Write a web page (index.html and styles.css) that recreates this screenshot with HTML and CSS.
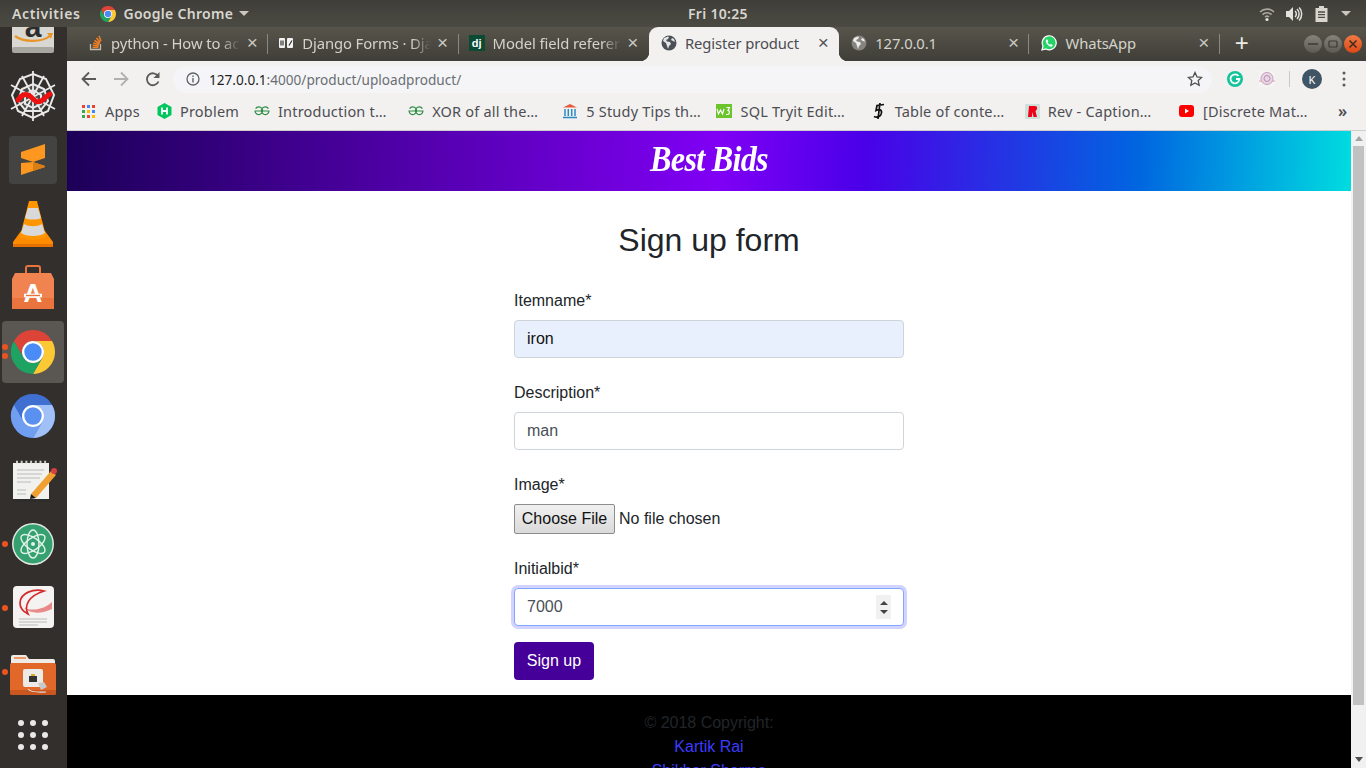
FILE: index.html
```html
<!DOCTYPE html>
<html lang="en">
<head>
<meta charset="utf-8">
<title>Register product</title>
<link rel="stylesheet" href="styles.css">
</head>
<body>
<svg class="defs" width="0" height="0" aria-hidden="true">
  <defs>
    <symbol id="chrome" viewBox="0 0 48 48">
      <path fill="#db4437" d="M3.2 12A24 24 0 0 1 44.78 12H24A12 12 0 0 0 13.6 30Z"/>
      <path fill="#fcc934" d="M44.78 12A24 24 0 0 1 24 48L34.39 30A12 12 0 0 0 24 12Z"/>
      <path fill="#1ea362" d="M24 48A24 24 0 0 1 3.2 12L13.6 30A12 12 0 0 0 34.39 30Z"/>
      <circle cx="24" cy="24" r="12" fill="#fff"/>
      <circle cx="24" cy="24" r="9.5" fill="#4b8bf5"/>
    </symbol>
    <symbol id="globe" viewBox="0 0 16 16">
      <circle cx="8" cy="8" r="7.5" fill="currentColor"/>
      <path fill="#fff" fill-opacity=".85" d="M7 1.5 3 3 2 6l3 2 1 3 1 3 1-3 2-2-1-2-3-.5L5 5l2-1 1-2zM11 3l-1 2 2 1 2 1-1-3z"/>
    </symbol>
    <symbol id="gfg" viewBox="0 0 16 10">
      <path fill="none" stroke="#2f8d46" stroke-width="1.2" d="M14.4 2.700A3.800 3.800 0 1 0 15 5H1A3.800 3.800 0 1 0 1.600 2.700"/>
    </symbol>
  </defs>
</svg>

<div class="desktop">
  <header class="topbar">
    <div class="top-left">
      <span class="top-item top-activities">Activities</span>
      <svg class="app-logo" width="16" height="16"><use href="#chrome"/></svg>
      <span class="top-item">Google Chrome</span>
      <span class="caret"></span>
    </div>
    <div class="top-item clock">Fri 10:25</div>
    <div class="top-right">
      <svg width="18" height="16" viewBox="0 0 18 16"><path fill="none" stroke="#a9a7a0" stroke-width="1.600" d="M2 6a10 10 0 0 1 14 0M4.500 8.600a6.500 6.500 0 0 1 9 0M7 11a3 3 0 0 1 4 0"/><circle cx="9" cy="13.500" r="1.600" fill="#e4e2dc"/></svg>
      <svg width="18" height="16" viewBox="0 0 18 16"><path fill="#e4e2dc" d="M1 5h3l4-4v14l-4-4H1z"/><path fill="none" stroke="#e4e2dc" stroke-width="1.500" d="M10 5a4 4 0 0 1 0 6M12 3a7 7 0 0 1 0 10M14.200 1.600a9.500 9.500 0 0 1 0 12.800"/></svg>
      <svg class="battery" width="14" height="16" viewBox="0 0 14 16"><path fill="#d8d6cf" d="M4 0h5v2h3.500v14H.5V2H4z"/><path stroke="#4e4c44" stroke-width="1.300" d="M3 6h7M3 8.700h7M3 11.400h7"/></svg>
      <span class="caret"></span>
    </div>
  </header>

  <div class="workspace">
    <nav class="dock">
      <svg class="dock-icon" viewBox="0 0 67 64">
        <rect x="12" y="8" width="42" height="44" rx="3" fill="#d9d7d2"/>
        <rect x="12" y="47" width="42" height="6" rx="2" fill="#a8a6a0"/>
        <text x="33" y="37" class="amazon-a">a</text>
        <path fill="none" stroke="#e8962a" stroke-width="2.200" d="M15 36c8 6 26 7 35 0"/>
        <path fill="#e8962a" d="M47 33l6 0-2 6z"/>
      </svg>
      <svg class="dock-icon" viewBox="0 0 67 64">
        <g fill="none" stroke="#e9e9e9" stroke-width="2">
          <path fill="#4a4a4a" d="M33 20 44 25 48 37 40 47 26 47 18 37 22 25Z"/>
          <path stroke-width="1.800" d="M33 7V57M11 21l44 24M55 21 11 45M22 12 44 52M44 12 22 52"/>
          <path fill="none" d="M33 10 46 15 54 31 48 47 33 54 18 47 12 31 20 15Z"/>
          <path d="M33 26 41 31 41 40 33 44 25 40 25 31Z"/>
        </g>
        <path fill="none" stroke="#ee1111" stroke-width="5" stroke-linecap="round" d="M18 36c4-6 9-7 13-3s6 6 10 4 5-5 9-7"/>
      </svg>
      <svg class="dock-icon" viewBox="0 0 67 64">
        <rect x="9" y="8" width="48" height="48" rx="4" fill="#434341"/>
        <path fill="#fd971f" d="M21 24 45 16V30L33 34 45 38V39L21 47V35L33 34 21 30Z"/>
        <path fill="#d97e14" d="M33 34 45 38V39L33 43Z"/>
      </svg>
      <svg class="dock-icon" viewBox="0 0 67 64">
        <path fill="#ff8c00" d="M13 50 21 39H45L53 50 53 55H13Z"/>
        <path fill="#e57200" d="M13 52H53V55H13Z"/>
        <path fill="#ff9500" d="M29 9H37L46 44C42 49 24 49 20 44Z"/>
        <path fill="#d9d9d9" d="M28 16H38L41 26C38 28 28 28 25 26Z"/>
        <path fill="#d9d9d9" d="M24 32C29 35 37 35 42 32L45 41C40 45 26 45 21 41Z"/>
      </svg>
      <svg class="dock-icon" viewBox="0 0 67 64">
        <path fill="none" stroke="#e9743e" stroke-width="2" d="M26 20V12a2 2 0 0 1 2-2h10a2 2 0 0 1 2 2v8"/>
        <path fill="#f08350" d="M15 17H51L54 23V53H12V23Z"/>
        <path fill="#e9743e" d="M12 42H54V53H12Z"/>
        <text x="33" y="46" class="store-a">A</text>
        <path stroke="#fff" stroke-width="3.600" d="M24 39.500H42"/>
        <path stroke="#e9743e" stroke-width="1.400" d="M26 39.500H40"/>
      </svg>
      <div class="dock-active">
        <span class="dot dot-a"></span><span class="dot dot-b"></span>
        <svg class="dock-logo" width="44" height="44"><use href="#chrome"/></svg>
      </div>
      <svg class="dock-icon" viewBox="0 0 67 64">
        <circle cx="33" cy="32" r="22" fill="#4a76cf"/>
        <g transform="translate(11 10) scale(.9167)">
          <path fill="#3f6fd0" d="M3.2 12A24 24 0 0 1 44.78 12H24A12 12 0 0 0 13.6 30Z"/>
          <path fill="#a2c0f8" d="M44.78 12A24 24 0 0 1 24 48L34.39 30A12 12 0 0 0 24 12Z"/>
          <path fill="#709ef0" d="M24 48A24 24 0 0 1 3.2 12L13.6 30A12 12 0 0 0 34.39 30Z"/>
          <circle cx="24" cy="24" r="12" fill="#fff"/>
          <circle cx="24" cy="24" r="9.500" fill="#5a90f0"/>
        </g>
      </svg>
      <svg class="dock-icon" viewBox="0 0 67 64">
        <path fill="#2d2d2b" d="M14 16H50V54H14Z"/>
        <path fill="#f1f1ee" d="M13 15H49V51H13Z"/>
        <path stroke="#bbb" stroke-width="1" d="M17 22H44M17 26H42M17 30H40M17 34H31M17 42H26M17 46H26"/>
        <path stroke="#cfcfcc" stroke-width="2.500" stroke-dasharray="2 2.700" d="M16 14H46"/>
        <path fill="#f0a030" d="M31 46 51 23 56 27 36 50Z"/>
        <path fill="#1c1c1c" d="M31 46 30 51 36 50Z"/>
        <circle cx="54" cy="23" r="3" fill="#d64040"/>
      </svg>
      <div class="dock-slot">
        <span class="dot dot-c"></span>
        <svg class="dock-icon" viewBox="0 0 67 64">
          <circle cx="33" cy="32" r="21" fill="#e3e8e2"/>
          <circle cx="33" cy="32" r="19.500" fill="#35a070"/>
          <g fill="none" stroke="#e3f3ea" stroke-width="1.400">
            <ellipse cx="33" cy="32" rx="14" ry="6" transform="rotate(35 33 32)"/>
            <ellipse cx="33" cy="32" rx="14" ry="6" transform="rotate(-35 33 32)"/>
            <ellipse cx="33" cy="32" rx="6" ry="14"/>
          </g>
          <circle cx="33" cy="32" r="2" fill="#e3f3ea"/>
        </svg>
      </div>
      <div class="dock-slot">
        <span class="dot dot-c"></span>
        <svg class="dock-icon" viewBox="0 0 67 64">
          <rect x="13" y="10" width="41" height="42" rx="4" fill="#f4f3f1"/>
          <path fill="#e88a8a" d="M24 32C34 36 46 32 52 26V33C42 38 30 38 24 32Z"/>
          <path fill="none" stroke="#d32b2b" stroke-width="1.700" d="M44 15C34 12 20 17 20 27 20 33 24 36 28 38 24 30 28 20 44 15Z"/>
          <path stroke="#b9b9b9" stroke-width="1" d="M19 43H47M19 46H47M19 49H38"/>
        </svg>
      </div>
      <div class="dock-slot">
        <span class="dot dot-c"></span>
        <svg class="dock-icon" viewBox="0 0 67 64">
          <g transform="translate(0 7)">
            <path fill="#efebe6" d="M11 15V10a2 2 0 0 1 2-2h13l3 4h24a2 2 0 0 1 2 2v4H11Z"/>
            <path fill="#f09a6a" d="M14 10H26V12H14Z"/>
            <path fill="#e2682a" d="M10 18a2 2 0 0 1 2-2h42a2 2 0 0 1 2 2v28a2 2 0 0 1-2 2H12a2 2 0 0 1-2-2Z"/>
            <path fill="#c9571f" d="M10 43H56V46a2 2 0 0 1-2 2H12a2 2 0 0 1-2-2Z"/>
            <rect x="23" y="22" width="20" height="18" rx="2" fill="#eceae6"/>
            <path fill="#333" d="M29 29h8v6h-8z"/>
            <path fill="#d8b020" d="M31 27h4v2h-4z"/>
            <path fill="#c9c9c9" d="M38 36l6-1 3 5-6 3z"/>
            <path fill="none" stroke="#ddd" stroke-width="1.200" d="M28 42c3 4 12 3 18 3"/>
          </g>
        </svg>
      </div>
      <svg class="dock-icon" viewBox="0 0 67 64">
        <g fill="#e8e8e6">
          <circle cx="21" cy="19" r="3"/><circle cx="33" cy="19" r="3"/><circle cx="45" cy="19" r="3"/>
          <circle cx="21" cy="31" r="3"/><circle cx="33" cy="31" r="3"/><circle cx="45" cy="31" r="3"/>
          <circle cx="21" cy="43" r="3"/><circle cx="33" cy="43" r="3"/><circle cx="45" cy="43" r="3"/>
        </g>
      </svg>
    </nav>

    <div class="browser">
      <div class="tabstrip">
        <div class="tab">
          <svg class="fav fav-so" width="16" height="16" viewBox="0 0 16 16"><path fill="none" stroke="#bcbbb6" stroke-width="1.300" d="M2.500 9v5.500h10V9"/><path stroke="#f48024" stroke-width="1.500" d="M4.500 12.500h6M4.700 10.300l6 .6M5.300 8l5.800 1.600M6.500 5.500l5.200 3M8.500 3l3.800 4.500M11 1l2 5"/></svg>
          <span class="tab-title">python - How to ac</span>
          <span class="tab-x">×</span>
        </div>
        <div class="tab">
          <svg class="fav" width="16" height="16" viewBox="0 0 16 16"><rect x="1" y="3" width="6" height="10" rx="1" fill="#f3f3f3"/><rect x="9" y="3" width="6" height="10" rx="1" fill="#f3f3f3"/><path stroke="#333" stroke-width="1.200" d="M3 5.500v5M5 5.500v5M11 10.500l3-5"/></svg>
          <span class="tab-title">Django Forms · Dja</span>
          <span class="tab-x">×</span>
        </div>
        <div class="tab">
          <span class="fav dj">dj</span>
          <span class="tab-title">Model field referer</span>
          <span class="tab-x">×</span>
        </div>
        <div class="tab tab-active">
          <svg class="fav globe-dark" width="16" height="16"><use href="#globe"/></svg>
          <span class="tab-title">Register product</span>
          <span class="tab-x">×</span>
        </div>
        <div class="tab tab-after">
          <svg class="fav globe-dim" width="16" height="16"><use href="#globe"/></svg>
          <span class="tab-title">127.0.0.1</span>
          <span class="tab-x">×</span>
        </div>
        <div class="tab tab-after">
          <svg class="fav" width="16" height="16" viewBox="0 0 16 16"><path fill="#25d366" stroke="#fff" stroke-width="1.200" d="M1 15l1-4a7 7 0 1 1 3 3z"/><path fill="#fff" d="M5.500 4.500c-1 1-1 2.500.5 4.500s3.500 3 5 2.500l.8-1.500-2-1-.8.800c-1-.4-2-1.400-2.500-2.500l.8-.8-1-2z"/></svg>
          <span class="tab-title">WhatsApp</span>
          <span class="tab-x">×</span>
        </div>
        <span class="new-tab">+</span>
        <div class="win-buttons">
          <span class="win-btn">
            <svg width="10" height="10" viewBox="0 0 10 10"><path stroke="#3b3a34" stroke-width="1.500" d="M0 5h10"/></svg>
          </span>
          <span class="win-btn">
            <svg width="10" height="10" viewBox="0 0 10 10"><rect x="1" y="2" width="8" height="6" rx="1" fill="none" stroke="#3b3a34" stroke-width="1.200"/></svg>
          </span>
          <span class="win-btn win-close">
            <svg width="10" height="10" viewBox="0 0 10 10"><path stroke="#3b2a20" stroke-width="1.500" d="M1.500 1.500l7 7M8.500 1.500l-7 7"/></svg>
          </span>
        </div>
      </div>

      <div class="toolbar">
        <svg class="tool" width="18" height="18" viewBox="0 0 18 18"><path fill="none" stroke="#5a5a5a" stroke-width="1.800" d="M16 9H3M9 2.500 2.500 9 9 15.500"/></svg>
        <svg class="tool" width="18" height="18" viewBox="0 0 18 18"><path fill="none" stroke="#b0b0b0" stroke-width="1.800" d="M2 9h13M9 2.500 15.500 9 9 15.500"/></svg>
        <svg class="tool" width="18" height="18" viewBox="0 0 18 18"><path fill="none" stroke="#5a5a5a" stroke-width="1.800" d="M14.500 11.500A6 6 0 1 1 14 6"/><path fill="#5a5a5a" d="M15.500 2v6h-6z"/></svg>
        <div class="omnibox">
          <svg width="14" height="14" viewBox="0 0 14 14"><circle cx="7" cy="7" r="6" fill="none" stroke="#5f6368" stroke-width="1.300"/><path stroke="#5f6368" stroke-width="1.400" d="M7 6v4.500M7 3.500v1.500"/></svg>
          <span class="url"><span class="url-host">127.0.0.1</span>:4000/product/uploadproduct/</span>
          <svg class="star" width="16" height="16" viewBox="0 0 16 16"><path fill="none" stroke="#4e4e4e" stroke-width="1.300" d="M8 1.500l2 4.400 4.700.5-3.500 3.200 1 4.700L8 11.900l-4.200 2.400 1-4.700L1.300 6.400 6 5.900z"/></svg>
        </div>
        <svg class="ext-g" width="16" height="16" viewBox="0 0 16 16"><circle cx="8" cy="8" r="8" fill="#15c39a"/><path fill="none" stroke="#fff" stroke-width="1.800" d="M11.500 5A4.500 4.500 0 1 0 12.500 8H9"/></svg>
        <svg class="ext-seal" width="16" height="16" viewBox="0 0 16 16"><rect width="16" height="16" fill="#f6f3f3"/><circle cx="8" cy="7.500" r="6" fill="#e9d6e4" stroke="#c6a1bf"/><circle cx="8" cy="7.500" r="3" fill="none" stroke="#b98fb1"/><path stroke="#d9a8a8" d="M0 10h3M13 10h3"/></svg>
        <span class="tool-sep"></span>
        <span class="avatar">K</span>
        <svg class="kebab" width="4" height="16" viewBox="0 0 4 16"><circle cx="2" cy="2" r="1.500" fill="#5a5a5a"/><circle cx="2" cy="8" r="1.500" fill="#5a5a5a"/><circle cx="2" cy="14" r="1.500" fill="#5a5a5a"/></svg>
      </div>

      <div class="bookmarks">
        <div class="bm bm-apps">
          <svg width="13" height="13" viewBox="0 0 13 13"><g><rect width="3" height="3" fill="#ea4335"/><rect x="5" width="3" height="3" fill="#4285f4"/><rect x="10" width="3" height="3" fill="#ea4335"/><rect y="5" width="3" height="3" fill="#34a853"/><rect x="5" y="5" width="3" height="3" fill="#fbbc05"/><rect x="10" y="5" width="3" height="3" fill="#4285f4"/><rect y="10" width="3" height="3" fill="#34a853"/><rect x="5" y="10" width="3" height="3" fill="#ea4335"/><rect x="10" y="10" width="3" height="3" fill="#fbbc05"/></g></svg>
          <span>Apps</span>
        </div>
        <div class="bm bm-problem">
          <svg width="15" height="16" viewBox="0 0 15 16"><path fill="#00c65e" d="M7.500 0 14.500 4V12L7.500 16 .5 12V4Z"/><path stroke="#fff" stroke-width="1.800" d="M5 4.500v7M10 4.500v7M5 8h5"/></svg>
          <span>Problem</span>
        </div>
        <div class="bm"><svg width="16" height="10"><use href="#gfg"/></svg><span>Introduction t…</span></div>
        <div class="bm"><svg width="16" height="10"><use href="#gfg"/></svg><span>XOR of all the…</span></div>
        <div class="bm">
          <svg width="16" height="16" viewBox="0 0 16 16"><path fill="#e25b3a" d="M8 1 15 4.500H1Z"/><path stroke="#2a8ac4" stroke-width="1.500" d="M3 6v7M6.300 6v7M9.700 6v7M13 6v7M1 14.500h14"/></svg>
          <span>5 Study Tips th…</span>
        </div>
        <div class="bm">
          <svg width="16" height="14" viewBox="0 0 16 14"><rect width="16" height="14" fill="#6bc42c"/><path fill="none" stroke="#fff" stroke-width="1.200" d="M1 5l1.500 5L4.500 6l2 4L8 5M10.500 3.500h3l-1.500 3c2 0 2 4-.5 4h-1.500"/></svg>
          <span>SQL Tryit Edit…</span>
        </div>
        <div class="bm">
          <svg width="16" height="18" viewBox="0 0 16 18"><path fill="none" stroke="#111" stroke-width="1.700" d="M13 2.500 6 3.500 5 8.500c3-1.500 6-1 5.500 2.500S6 16 3 14.500M9 1 7 17"/></svg>
          <span>Table of conte…</span>
        </div>
        <div class="bm">
          <svg width="15" height="15" viewBox="0 0 15 15"><rect width="15" height="15" rx="1" fill="#cfe0da"/><path fill="#f00018" d="M4 2h6c2.500 0 3 3 .5 5l1.500 6H8.500L7.500 8 6.800 13H3z"/></svg>
          <span>Rev - Caption…</span>
        </div>
        <div class="bm bm-wide">
          <svg width="15" height="12" viewBox="0 0 15 12"><rect width="15" height="12" rx="3" fill="#f00"/><path fill="#fff" d="M6 3.500 10 6 6 8.500z"/></svg>
          <span>[Discrete Mat…</span>
        </div>
        <span class="bm-more">»</span>
      </div>

      <div class="viewport">
        <main class="page">
          <header class="brand"><h1 class="brand-name">Best Bids</h1></header>
          <section class="content">
            <h2 class="form-title">Sign up form</h2>
            <form class="form">
              <div class="field">
                <label class="label" for="itemname">Itemname*</label>
                <input class="input input-filled" id="itemname" type="text" value="iron">
              </div>
              <div class="field">
                <label class="label" for="description">Description*</label>
                <input class="input" id="description" type="text" value="man">
              </div>
              <div class="field">
                <label class="label" for="image">Image*</label>
                <input class="file" id="image" type="file">
              </div>
              <div class="field field-bid">
                <label class="label" for="bid">Initialbid*</label>
                <div class="bid-wrap">
                  <input class="input input-focus" id="bid" type="text" value="7000">
                  <span class="spinner"><i class="spin-up"></i><i class="spin-down"></i></span>
                </div>
              </div>
              <button class="submit" type="button">Sign up</button>
            </form>
          </section>
          <footer class="footer">
            <p class="footer-line">© 2018 Copyright:</p>
            <p class="footer-line"><a class="footer-link">Kartik Rai</a></p>
            <p class="footer-line"><a class="footer-link">Shikhar Sharma</a></p>
          </footer>
        </main>
        <div class="scrollbar">
          <span class="scroll-up"></span>
          <span class="scroll-thumb"></span>
          <span class="scroll-down"></span>
        </div>
      </div>
    </div>
  </div>
</div>
</body>
</html>
```
FILE: styles.css
```css
* { box-sizing: border-box; }
html, body { margin: 0; padding: 0; height: 100%; overflow: hidden; }
body { font-family: "Liberation Sans", Arial, sans-serif; color: #212529; }
.defs { display: block; height: 0; }
.desktop { display: flex; flex-direction: column; width: 1366px; height: 768px; overflow: hidden; background: #302e2b; }

/* top bar */
.topbar { display: grid; grid-template-columns: 688px auto 1fr; align-items: center; height: 27px; flex: none; background: linear-gradient(#3f3e39, #4b4a42); color: #dcdad3; font: 600 14px "Noto Sans", sans-serif; }
.top-left { display: flex; align-items: center; padding-left: 12px; }
.top-item { color: #d8d6cf; white-space: nowrap; letter-spacing: .3px; }
.top-activities { letter-spacing: .6px; }
.app-logo { margin: 0 7px 0 20px; }
.caret { display: inline-block; width: 0; height: 0; border: 5px solid transparent; border-top-color: #c9c7c0; border-bottom: 0; margin-left: 6px; }
.top-right { display: flex; align-items: center; justify-content: flex-end; gap: 9px; padding-right: 15px; }
.top-right .caret { margin-left: 3px; }
.battery { margin-left: 3px; }

/* layout */
.workspace { display: flex; flex: 1; min-height: 0; }
.dock { width: 67px; flex: none; margin-top: -27px; display: flex; flex-direction: column; height: 768px; background: #322f2c; overflow: hidden; position: relative; clip-path: inset(27px 0 0 0); }
.dock-icon { display: block; width: 67px; height: 64px; flex: none; }
.dock-slot { position: relative; height: 64px; flex: none; }
.dock-active { position: relative; flex: none; height: 64px; display: flex; align-items: center; justify-content: center; }
.dock-active::before { content: ""; position: absolute; left: 2px; top: 1px; width: 62px; height: 62px; border-radius: 4px; background: #5a5753; }
.dock-logo { position: relative; margin-left: -1px; }
.dot { position: absolute; left: 2px; width: 6px; height: 6px; border-radius: 50%; background: #e95420; z-index: 1; }
.dot-a { top: 24px; }
.dot-b { top: 33px; }
.dot-c { top: 29px; }

.browser { flex: 1; min-width: 0; display: flex; flex-direction: column; }

/* tabs */
.tabstrip { height: 34px; flex: none; display: flex; align-items: center; padding-left: 11px; background: linear-gradient(#57554b, #3f3e38); font: 14.8px "Noto Sans", sans-serif; }
.tab { position: relative; width: 190.3px; height: 34px; flex: none; display: flex; align-items: center; padding: 0 8px 2px 10px; color: #d4d2ca; }
.tab::after { content: ""; position: absolute; right: 0; top: 7px; height: 20px; width: 1px; background: #8a887f; }
.tab:nth-child(3)::after { display: none; }
.tab-after { padding-left: 12px; }
.tab-active { padding-left: 12px; background: #f2f1f0; color: #4c4c50; border-radius: 9px 9px 0 0; z-index: 1; }
.tab-active::before, .tab-active::after { content: ""; position: absolute; bottom: 0; top: auto; width: 9px; height: 9px; background: transparent; }
.tab-active::before { left: -9px; background: radial-gradient(circle at 0 0, transparent 9px, #f2f1f0 9.5px); }
.tab-active::after { right: -9px; background: radial-gradient(circle at 100% 0, transparent 9px, #f2f1f0 9.5px); }
.fav { flex: none; margin-right: 8px; }
.fav-so { margin-right: 7px; }
.dj { display: flex; width: 16px; height: 16px; align-items: center; justify-content: center; background: #0c4b33; color: #fff; font: 700 11px "Liberation Sans", sans-serif; }
.globe-dark { color: #4c4f55; }
.globe-dim { color: #85847e; }
.tab-title { flex: 1; min-width: 0; overflow: hidden; white-space: nowrap; letter-spacing: -.1px; -webkit-mask-image: linear-gradient(to right, #000 85%, transparent 100%); mask-image: linear-gradient(to right, #000 85%, transparent 100%); }
.tab-active .tab-title, .tab-after .tab-title { -webkit-mask-image: none; mask-image: none; }
.tab-x { flex: none; width: 16px; margin: 0 0 0 4px; text-align: center; font: 19px "Liberation Sans", sans-serif; color: #c9c7c0; }
.tab-active .tab-x { color: #55555a; }
.new-tab { margin-left: 11px; padding-bottom: 2px; color: #ecebe6; font: 24px "Liberation Sans", sans-serif; width: 22px; text-align: center; }
.win-buttons { margin-left: auto; display: flex; gap: 2px; padding-right: 4px; }
.win-btn { width: 18px; height: 18px; border-radius: 50%; display: flex; align-items: center; justify-content: center; background: linear-gradient(#85837a, #5c5a52); }
.win-close { background: linear-gradient(#f07a45, #dd4814); }

/* toolbar */
.toolbar { height: 36px; flex: none; display: flex; align-items: center; padding-left: 13px; background: #f2f1f0; }
.tool { margin-right: 14px; flex: none; }
.omnibox { width: 1039px; height: 27px; margin-left: -3px; border-radius: 14px; background: #f5f5f7; display: flex; align-items: center; padding: 0 9px 0 13px; color: #6a6e73; font: 13.6px "Noto Sans", sans-serif; }
.url { margin-left: 9px; white-space: nowrap; }
.url-host { color: #1f1f1f; }
.star { margin-left: auto; }
.ext-g { margin-left: 15px; }
.ext-seal { margin-left: 16px; }
.tool-sep { width: 1px; height: 16px; background: #c9c8c6; margin-left: 14px; }
.avatar { width: 20px; height: 20px; border-radius: 50%; background: #3f5565; color: #fff; font: 11px "Noto Sans", sans-serif; display: flex; align-items: center; justify-content: center; margin-left: 12px; }
.kebab { margin-left: 20px; }

/* bookmarks */
.bookmarks { height: 34px; flex: none; display: flex; align-items: center; padding: 0 0 5px 15px; background: #f2f1f0; border-bottom: 1px solid #cfcecd; color: #4d4d52; font: 14.5px "Noto Sans", sans-serif; letter-spacing: .2px; }
.bm { display: flex; align-items: center; gap: 8px; width: 154.17px; flex: none; white-space: nowrap; }
.bm svg { flex: none; }
.bm-apps { width: 75px; gap: 10px; }
.bm-problem { width: 97px; }
.bm-wide { gap: 9px; }
.bm-more { margin-left: 5px; font-size: 16px; font-weight: 600; }

/* page */
.viewport { flex: 1; min-height: 0; display: flex; }
.page { flex: 1; min-width: 0; background: #fff; overflow: hidden; display: flex; flex-direction: column; }
.brand { height: 60px; flex: none; display: flex; align-items: center; justify-content: center; padding-bottom: 3px; background: linear-gradient(92deg, #1c0057 0%, #8000f5 50.7%, #4a00e8 62%, #0066e0 83.5%, #00dce0 100%); }
.brand-name { margin: 0; color: #fff; font: italic 700 35px "Liberation Serif", serif; letter-spacing: -.8px; transform: scaleX(.92); }
.content { width: 390px; margin: 0 auto; flex: none; height: 504px; }
.form-title { margin: 30px 0 0; text-align: center; font-size: 32px; line-height: 38px; font-weight: 400; color: #212529; }
.form { margin-top: 30px; }
.field { margin-bottom: 23px; }
.field-bid { margin-bottom: 16px; }
.label { display: block; font-size: 16px; line-height: 24px; margin-bottom: 7px; }
.input { display: block; width: 100%; height: 38px; padding: 6px 12px; border: 1px solid #ced4da; border-radius: 4px; font: 16px "Liberation Sans", sans-serif; color: #495057; background: #fff; outline: 0; }
.input-filled { background: #e8f0fe; color: #111; }
.input-focus { border-color: #80a8ff; box-shadow: 0 0 0 3px #d2d4ff; }
.file { display: block; font: 16px "Liberation Sans", sans-serif; color: #212529; width: 100%; height: 30px; }
.file::file-selector-button { width: 101px; height: 30px; margin-right: 4px; padding: 0; border: 1px solid #8d8d8d; border-radius: 2px; background: linear-gradient(#f0f0f0, #dadada); color: #111; font: 16px "Liberation Sans", sans-serif; }
.bid-wrap { position: relative; }
.spinner { position: absolute; right: 13px; top: 7px; width: 15px; height: 24px; background: #f1f1f1; display: flex; flex-direction: column; align-items: center; justify-content: center; gap: 5px; }
.spin-up, .spin-down { display: block; width: 0; height: 0; border: 4px solid transparent; }
.spin-up { border-bottom-color: #444; border-top: 0; }
.spin-down { border-top-color: #444; border-bottom: 0; }
.submit { display: block; width: 80px; height: 38px; border: 0; border-radius: 4px; background: #450099; color: #fff; font: 16px "Liberation Sans", sans-serif; }
.footer { background: #000; flex: none; height: 120px; padding-top: 16px; text-align: center; color: #212529; font-size: 16px; line-height: 24px; }
.footer-line { margin: 0; }
.footer-link { color: #3b3bff; }

/* scrollbar */
.scrollbar { width: 15px; flex: none; background: #f1f1f1; display: flex; flex-direction: column; align-items: center; }
.scroll-up { flex: none; width: 0; height: 0; margin-top: 5px; border: 4px solid transparent; border-bottom: 5px solid #a3a3a3; border-top: 0; }
.scroll-thumb { flex: none; width: 11px; height: 559px; margin-top: 5px; background: #c1c1c1; }
.scroll-down { flex: none; width: 0; height: 0; margin-top: 52px; border: 4px solid transparent; border-top: 5px solid #505050; border-bottom: 0; }

.amazon-a { font: 700 30px "Liberation Sans", sans-serif; fill: #2d2d2d; text-anchor: middle; }
.store-a { font: 700 26px "Liberation Sans", sans-serif; fill: #fff; text-anchor: middle; }
```
